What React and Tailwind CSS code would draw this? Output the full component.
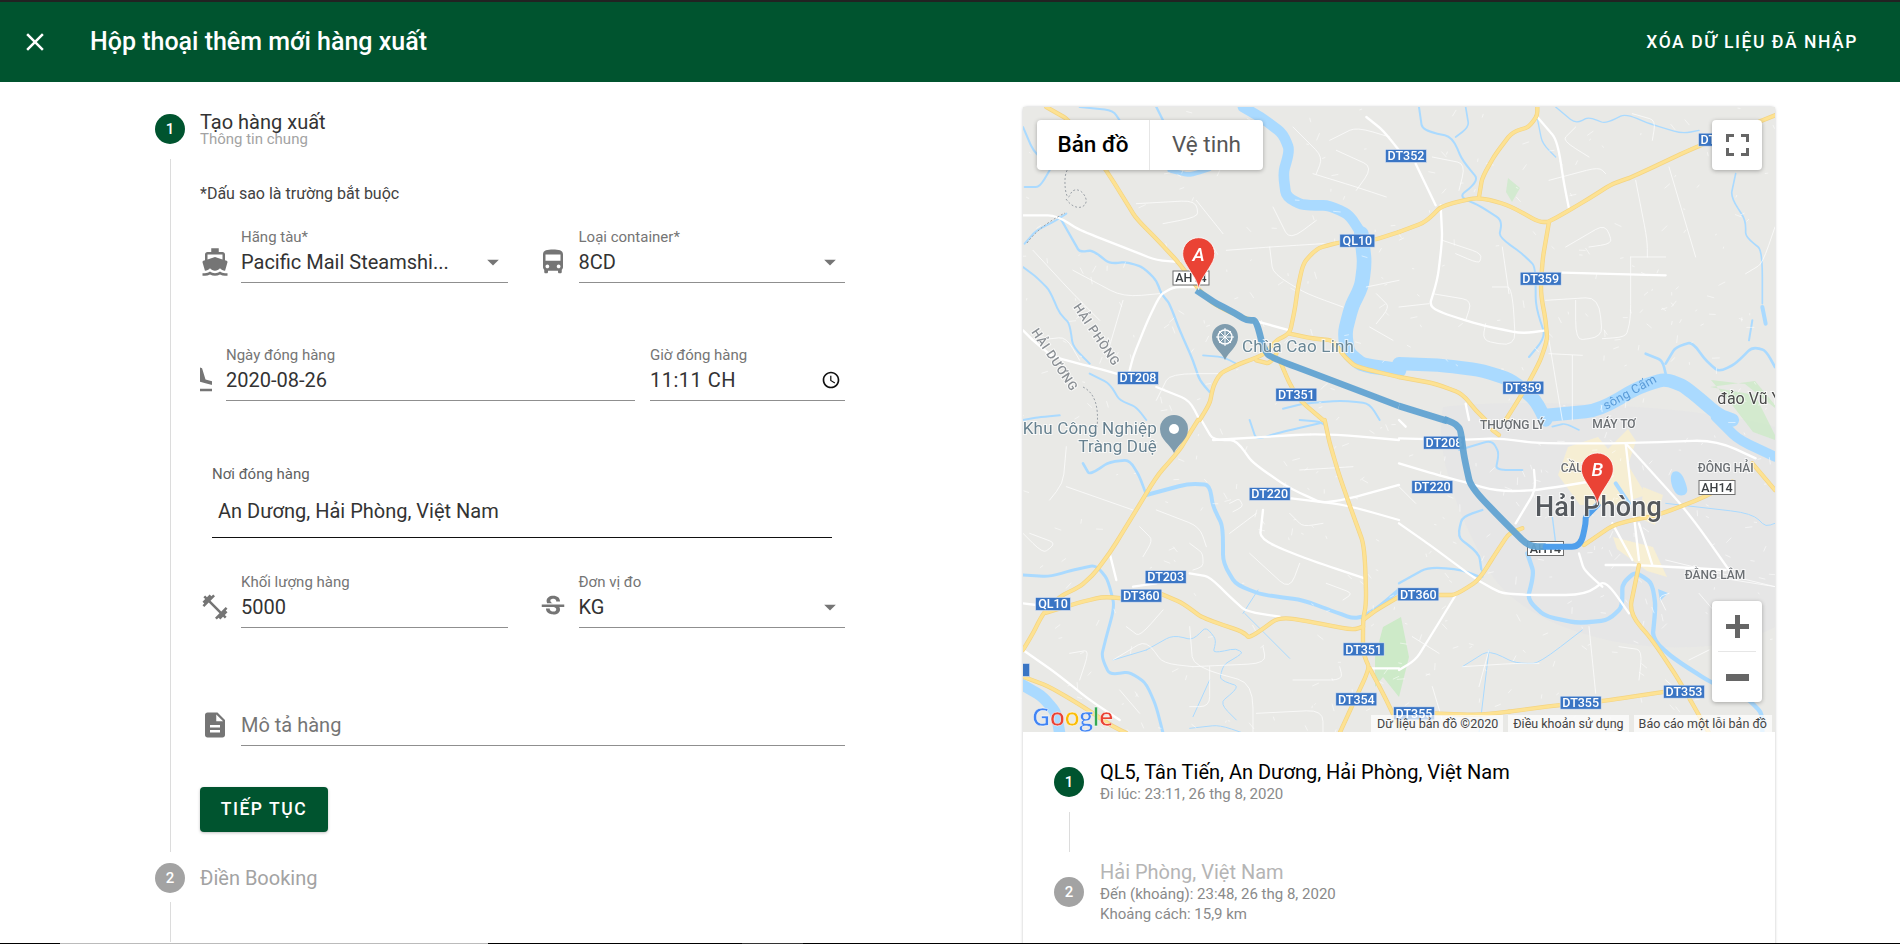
import React from 'react';

// material icon paths
const ICONS = {
  boat: 'M20 21c-1.39 0-2.78-.47-4-1.32-2.44 1.71-5.56 1.71-8 0C6.78 20.53 5.39 21 4 21H2v2h2c1.38 0 2.74-.35 4-.99 2.52 1.29 5.48 1.29 8 0 1.26.65 2.62.99 4 .99h2v-2h-2zM3.95 19H4c1.6 0 3.02-.88 4-2 .98 1.12 2.4 2 4 2s3.02-.88 4-2c.98 1.12 2.4 2 4 2h.05l1.89-6.68c.08-.26.06-.54-.06-.78s-.34-.42-.6-.5L20 10.62V6c0-1.1-.9-2-2-2h-3V1H9v3H6c-1.1 0-2 .9-2 2v4.62l-1.29.42c-.26.08-.48.26-.6.5s-.15.52-.06.78L3.95 19zM6 6h12v3.97L12 8 6 9.97V6z',
  bus: 'M4 16c0 .88.39 1.67 1 2.22V20c0 .55.45 1 1 1h1c.55 0 1-.45 1-1v-1h8v1c0 .55.45 1 1 1h1c.55 0 1-.45 1-1v-1.78c.61-.55 1-1.34 1-2.22V6c0-3.5-3.58-4-8-4s-8 .5-8 4v10zm3.5 1c-.83 0-1.5-.67-1.5-1.5S6.67 14 7.5 14s1.5.67 1.5 1.5S8.33 17 7.5 17zm9 0c-.83 0-1.5-.67-1.5-1.5s.67-1.5 1.5-1.5 1.5.67 1.5 1.5-.67 1.5-1.5 1.5zm1.5-6H6V6h12v5z',
  land: 'M2.5 19h19v2h-19zm7.18-5.73l4.35 1.16 5.31 1.42c.8.21 1.62-.26 1.84-1.06.21-.8-.26-1.62-1.06-1.84l-5.31-1.42-2.76-9.02L10.12 2v8.28L5.15 8.95l-.93-2.32-1.45-.39v5.17l1.6.43 5.31 1.43z',
  clock: 'M11.99 2C6.47 2 2 6.48 2 12s4.47 10 9.99 10C17.52 22 22 17.52 22 12S17.52 2 11.99 2zM12 20c-4.42 0-8-3.58-8-8s3.58-8 8-8 8 3.58 8 8-3.58 8-8 8zm.5-13H11v6l5.25 3.15.75-1.23-4.5-2.67z',
  weight: 'M20.57 14.86L22 13.43 20.57 12 17 15.57 8.43 7 12 3.43 10.57 2 9.14 3.43 7.71 2 5.57 4.14 4.14 2.71 2.71 4.14l1.43 1.43L2 7.71l1.43 1.43L2 10.57 3.43 12 7 8.43 15.57 17 12 20.57 13.43 22l1.43-1.43L16.29 22l2.14-2.14 1.43 1.43 1.43-1.43-1.43-1.43L22 16.29z',
  strike: 'M7.24 8.75c-.26-.48-.39-1.03-.39-1.67 0-.61.13-1.16.4-1.67.26-.5.63-.93 1.11-1.29.48-.35 1.05-.63 1.7-.83.66-.19 1.39-.29 2.18-.29.81 0 1.54.11 2.21.34.66.22 1.23.54 1.69.94.47.4.83.88 1.08 1.43.25.55.38 1.15.38 1.81h-3.01c0-.31-.05-.59-.15-.85-.09-.27-.24-.49-.44-.68-.2-.19-.45-.33-.75-.44-.3-.1-.66-.16-1.06-.16-.39 0-.74.04-1.03.13-.29.09-.53.21-.72.36-.19.16-.34.34-.44.55-.1.21-.15.43-.15.66 0 .48.25.88.74 1.21.38.25.77.48 1.41.7H7.39c-.05-.08-.11-.17-.15-.25zM21 12v-2H3v2h9.62c.18.07.4.14.55.2.37.17.66.34.87.51.21.17.35.36.43.57.07.2.11.43.11.69 0 .23-.05.45-.14.66-.09.2-.23.38-.42.53-.19.15-.42.26-.71.35-.29.08-.63.13-1.01.13-.43 0-.83-.04-1.18-.13s-.66-.23-.91-.42c-.25-.19-.45-.44-.59-.75-.14-.31-.25-.76-.25-1.21H6.4c0 .55.08 1.13.24 1.58.16.45.37.85.65 1.21.28.35.6.66.98.92.37.26.78.48 1.22.65.44.17.9.3 1.38.39.48.08.96.13 1.44.13.8 0 1.53-.09 2.18-.28s1.21-.45 1.67-.79c.46-.34.82-.77 1.07-1.27s.38-1.07.38-1.71c0-.6-.1-1.14-.31-1.61-.05-.11-.11-.23-.17-.33H21z',
  doc: 'M14 2H6c-1.1 0-1.99.9-1.99 2L4 20c0 1.1.89 2 1.99 2H18c1.1 0 2-.9 2-2V8l-6-6zm2 16H8v-2h8v2zm0-4H8v-2h8v2zm-3-5V3.5L18.5 9H13z',
  arrow: 'M7 10l5 5 5-5z',
};

function Icon({ name, className }) {
  return (
    <svg viewBox="0 0 24 24" className={className} fill="currentColor">
      <path d={ICONS[name]} />
    </svg>
  );
}

function Field({ label, value, select, placeholder, clock, className = '' }) {
  return (
    <div className={`flex flex-col min-w-0 ${className}`}>
      <div className="h-4 text-[15px] leading-4 text-[#757575] whitespace-nowrap">{label}</div>
      <div className="flex h-[38px] items-center justify-between border-b border-[#8f8f8f] pb-[3px]">
        <span className={`text-[20px] leading-6 whitespace-nowrap ${placeholder ? 'text-[#757575]' : 'text-[#333]'} ${clock ? 'tracking-[0.5px]' : ''}`}>{value}</span>
        {select && <Icon name="arrow" className="mr-[1px] h-7 w-7 text-[#757575]" />}
        {clock && <Icon name="clock" className="mr-[4px] h-[20px] w-[20px] text-[#111]" />}
      </div>
    </div>
  );
}

function IconField({ icon, ...props }) {
  return (
    <div className="flex flex-1 items-end">
      <div className="mb-[6px] w-[41px] shrink-0">
        <Icon name={icon} className="h-[30px] w-[30px] text-[#757575]" />
      </div>
      <Field {...props} className="flex-1" />
    </div>
  );
}

function StepDot({ n, active }) {
  return (
    <div className={`flex h-[30px] w-[30px] shrink-0 items-center justify-center rounded-full text-[15px] font-medium text-white ${active ? 'bg-[#00542f]' : 'bg-[#a3a3a3]'}`}>
      {n}
    </div>
  );
}

/* ---------- map drawing ---------- */
// every feature is written in px of a 3x crop of one quarter of the map
const OFFSET = { a: [0, 0], b: [376, 0], c: [0, 313], d: [376, 313] };

const WATER = {
  a: [
    [32, '660,0 720,35 780,80 800,130 780,200 790,270 840,295 920,295 980,325 1015,380'],
    [44, '1015,380 1025,470 1015,540 985,600 965,680 975,740 1020,775 1128,790'],
    [7, '110,330 150,400 170,435 210,430 260,470 310,465 360,480 400,520 415,560 440,590 470,670 510,760 530,820 560,855'],
    [6, '5,410 40,370 100,340 130,320'],
    [6, '0,480 40,510 80,550 110,620 140,650 150,720 200,770'],
    [6, '5,240 50,240 80,190'],
    [6, '0,60 30,130 60,160'],
    [6, '170,0 270,10 290,40'],
    [7, '400,0 430,60 470,80'],
    [6, '200,800 260,830 290,880 340,900 370,939'],
    [6, '780,905 840,890 960,880 1040,890 1070,939'],
    [6, '0,939 50,930 110,925'],
    [14, '440,190 500,205 560,185'],
    [5, '540,745 600,750 640,770'],
  ],
  b: [
    [40, '0,770 130,775 250,790 340,820 410,880 440,939'],
    [40, '440,925 600,910 720,840 800,815 860,840 960,925 1000,939'],
    [6, '60,0 70,70 160,90 190,160 240,220 180,270 240,295 310,340 300,390 370,440 410,480 410,600 440,690 390,750'],
    [8, '800,770 830,720 880,705 920,760 960,795 1010,770 1060,720 1100,730 1128,780'],
    [8, '740,740 790,760 800,800'],
    [5, '1010,200 995,270 1040,340 1040,390 1090,430 1090,590'],
    [12, '1090,600 1100,650'],
    [4, '470,0 530,50 570,30 620,50 680,20 750,50 850,80 900,70'],
    [4, '415,35 430,110 470,150'],
    [6, '1060,640 1050,700'],
    [5, '200,0 210,60 170,90'],
  ],
  c: [
    [9, '0,465 80,470 150,450 220,435 255,480 275,560 250,650 235,710 260,765 320,755 370,790 400,860 420,939'],
    [8, '180,130 200,165 260,125 320,120 350,170 370,225'],
    [12, '370,225 500,190 560,195 570,260 600,320 600,430 640,495 720,525 840,540 920,570 990,595 1020,590 1070,560 1128,510'],
    [3, '370,690 450,645 510,660 550,620 580,660 570,700 640,685 660,700 600,735 590,780 650,800 590,850 640,900'],
    [3, '665,580 800,715'],
    [3, '705,510 660,580'],
    [3, '510,890 560,780'],
    [3, '270,720 370,690'],
    [34, '-10,790 60,830 100,880 110,939'],
    [6, '680,0 700,60 760,40 890,10'],
    [6, '830,0 890,5 905,15'],
    [3, '500,925 590,915 660,939'],
  ],
  d: [
    [13, '385,400 405,460 385,540 440,590 540,610 630,600 670,560 670,490 710,455 760,490 770,560 760,660 830,720 940,790 1040,830 1090,880 1090,939'],
    [7, '0,490 90,440 190,450 240,470'],
    [7, '250,470 240,400 175,350 190,290 250,270'],
    [6, '180,90 280,60 300,100 290,150 370,150'],
    [30, '950,-10 1020,60 1128,110'],
    [12, '650,190 690,250'],
    [3, '190,740 270,690 350,730 420,730 550,630'],
    [3, '240,939 270,690'],
    [3, '800,250 1060,280 1100,320 1128,310'],
    [5, '460,20 500,10 540,30'],
    [4, '460,290 470,370'],
  ],
};

const MINOR = {
  a: ['340,290 520,280 525,330 420,350', '610,430 740,420 900,410', '740,420 750,500 850,560 960,600', '750,300 800,400 880,340', '920,100 1000,60 1100,90', '870,200 1000,240 1090,270', '1030,540 1128,520', '1040,660 1110,700', '300,580 250,750', '150,490 300,570 410,560', '30,430 150,560 230,640', '520,280 600,380', '400,880 440,800 600,800', '810,60 900,150 880,200', '940,130 1050,180 1000,250', '1060,560 1100,600 1060,650', '40,700 130,690 170,760'],
  b: ['100,150 200,170 180,250', '130,400 250,440 240,470 170,440', '280,540 340,540 350,720 250,700 260,650', '440,580 600,570 610,690 530,700 530,580', '500,420 620,350 640,410 570,420', '710,220 745,400 745,450', '810,180 890,450', '450,740 550,745', '520,745 520,939', '450,700 490,939', '450,220 600,180 620,200', '310,420 330,560', '0,600 90,590', '1040,500 1090,470 1128,360', '100,560 220,580 200,640', '530,60 490,100 570,150', '700,20 770,40 760,100', '695,450 800,450', '695,450 695,640 680,690 610,695'],
  c: ['130,80 120,190 80,240', '130,200 330,270', '20,340 100,370 60,400 0,340', '350,320 390,360 360,410', '500,370 540,400 540,440 510,450', '400,270 530,320 550,380', '310,620 350,650 420,570', '500,620 510,740 690,790 690,939', '510,740 730,730 720,680', '560,740 560,860 500,860', '270,720 370,660 420,730 510,740', '810,780 960,780 950,740', '700,880 900,870 900,939', '620,250 650,235 660,260 630,275', '620,340 700,280', '680,400 800,510 830,430', '910,490 990,520 960,540', '830,150 990,140', '800,280 840,320 900,310', '290,810 350,880', '140,700 200,690 170,780'],
  d: ['0,200 50,250', '190,740 350,730 420,730', '270,690 240,800', '100,800 130,900', '660,680 730,690 720,780', '800,570 780,530 810,520', '900,520 960,590', '870,720 930,690', '800,780 880,850', '570,620 590,820', '40,650 120,700', '880,460 1128,500', '800,420 1128,500'],
};

const WHITE = {
  a: ['0,325 100,325 170,370 300,420 400,460 470,465', '525,540 450,540 410,565 370,650 330,750 320,790', '0,670 30,700 90,750 190,775 280,800', '400,840 500,880 530,939', '690,640 800,670', '1030,30 1080,70 1128,130'],
  b: ['415,30 475,100 495,230 510,305', '50,170 110,295', '125,295 130,400 115,520 90,600 150,625 250,655 370,680 440,670', '490,497 800,505', '200,890 210,939'],
  c: ['535,0 570,60 640,60 690,130 800,205 910,255 1128,195', '805,235 970,255 1128,300', '570,60 900,40 1128,60', '500,460 560,470 620,530 670,575 770,590', '260,400 280,480', '0,550 40,555', '0,690 100,760 200,840 290,900', '720,270 710,360 860,420 1025,475', '1040,745 1128,745', '330,500 400,490'],
  d: ['0,55 180,60 300,55 420,70 680,70 950,60 1070,115', '0,130 100,160 300,215 420,210 600,180', '0,310 100,380 240,485 320,525 560,525 620,480 690,580', '540,400 555,450 610,500', '680,70 720,420', '640,310 700,420', '720,310 760,435', '620,435 720,435 980,450', '350,310 410,210 405,150', '170,525 100,640 50,720 0,750', '680,70 870,280 990,450', '0,0 20,20'],
};

const YELLOW = {
  a: ['70,0 140,40 250,190 300,270 340,335 400,395 470,470 525,545 570,590 640,625 690,640', '1128,375 1050,400 950,405 880,425 840,470 825,540 815,610 800,680 760,700 720,745 650,770 590,800 570,840 560,890 530,939', '800,680 870,695 930,700 965,750 1000,780 1128,810', '770,760 800,830 830,880 900,939', '700,760 740,770 760,740'],
  b: ['0,375 80,345 130,295 240,270 330,295 420,345 450,345 570,275 640,230 700,210 890,120 1128,25', '240,270 250,210 290,140 340,75 390,60 415,25 415,0', '450,345 430,460 425,560 440,640 445,700 420,770 370,860 320,939', '0,810 110,830 190,860 230,910 260,939'],
  c: ['525,0 500,40 470,90 400,170 340,270 260,400 210,465 170,500 110,530 60,580 30,640 0,690', '70,578 160,550 240,530 300,535', '410,520 480,550 540,595 660,635 680,655 770,590 860,605 990,630 1020,620', '905,0 920,70 950,170 985,270 1025,380 1030,550 1020,600 1020,700 1040,745 1000,830 950,939', '1040,745 1085,830 1128,920', '1020,600 1060,570 1128,530', '0,770 80,800 180,860 270,920 310,939'],
  d: ['120,525 170,525 240,480 290,400 330,340 370,325', '555,375 650,310 780,285 920,230 1000,185', '1060,130 1128,210', '720,435 690,580 760,660 840,780 930,939', '330,875 480,855 600,845 800,815', '100,880 240,885 330,875', '280,30 300,45'],
};

const ROUTE_DARK = {
  a: '520,550 580,590 630,615 670,640 700,640 720,720 740,750 900,810 1128,897',
  b: '0,897 145,942',
  d: '135,-3 170,12 185,30 195,110 215,200 300,290 390,380 440,380',
};
const ROUTE_LIGHT = { d: '440,380 545,380 560,310 560,290 595,255' };

const SHIELDS = [
  ['a', 345, 813, 'DT208'], ['a', 1003, 401, 'QL10', 35], ['a', 820, 863, 'DT351'],
  ['a', 1149, 147, 'DT352'], ['b', 960, 98, 'DT359'], ['b', 425, 515, 'DT359'], ['b', 373, 842, 'DT359'],
  ['c', 740, 222, 'DT220'], ['c', 428, 471, 'DT203'], ['c', 355, 527, 'DT360'], ['c', 90, 552, 'QL10', 35],
  ['c', 1022, 688, 'DT351'], ['c', 1000, 838, 'DT354'], ['c', -25, 750, '', 30],
  ['d', 135, 68, 'DT208'], ['d', 100, 201, 'DT220'], ['d', 58, 523, 'DT360'], ['d', 855, 815, 'DT353'],
  ['d', 545, 848, 'DT355'], ['d', 45, 880, 'DT355'],
];

const PLACES = [
  ['b', 955, 892, 'đảo Vũ Yên', 16, '#4a4a4a', 400, 'start'],
  ['d', 340, 26, 'THƯỢNG LÝ', 12, '#6b6f73', 500, 'middle'],
  ['d', 645, 24, 'MÁY TƠ', 12, '#6b6f73', 500, 'middle'],
  ['d', 485, 157, 'CẦU', 12, '#6b6f73', 500, 'start'],
  ['d', 980, 155, 'ĐÔNG HẢI', 12, '#6b6f73', 500, 'middle'],
  ['d', 948, 477, 'ĐẰNG LÂM', 12, '#6b6f73', 500, 'middle'],
];

// deterministic speckle for the small village lanes
const SPECKLE = (() => {
  const out = [];
  let s = 17;
  const rnd = () => {
    s = (s * 16807) % 2147483647;
    return s / 2147483647;
  };
  for (let i = 0; i < 520; i++) {
    const x = rnd() * 752;
    const y = rnd() * 625;
    const a = rnd() * 3.14;
    const l = 2 + rnd() * 6;
    out.push(`M${x.toFixed(1)} ${y.toFixed(1)}l${(Math.cos(a) * l).toFixed(1)} ${(Math.sin(a) * l).toFixed(1)}`);
  }
  return out.join('');
})();

function smooth(str) {
  const p = str.split(' ').map((s) => s.split(',').map(Number));
  if (p.length < 3) return `M${p.map((q) => q.join(' ')).join('L')}`;
  let d = `M${p[0][0]} ${p[0][1]}`;
  for (let i = 1; i < p.length - 1; i++) {
    const mx = (p[i][0] + p[i + 1][0]) / 2;
    const my = (p[i][1] + p[i + 1][1]) / 2;
    d += `L${(p[i - 1][0] * 0.25 + p[i][0] * 0.75).toFixed(1)} ${(p[i - 1][1] * 0.25 + p[i][1] * 0.75).toFixed(1)}Q${p[i][0]} ${p[i][1]} ${mx} ${my}`;
  }
  const e = p[p.length - 1];
  return `${d}L${e[0]} ${e[1]}`;
}

function Quarter({ q, children }) {
  const [x, y] = OFFSET[q];
  return <g transform={`translate(${x} ${y}) scale(0.33333)`}>{children}</g>;
}

function Layer({ data, color, width, opacity }) {
  return Object.keys(data).map((q) => (
    <Quarter key={q} q={q}>
      {data[q].map((d, i) => (
        <path key={i} d={smooth(d)} fill="none" stroke={color} strokeWidth={width} opacity={opacity} strokeLinecap="round" strokeLinejoin="round" />
      ))}
    </Quarter>
  ));
}

function Shield({ q, x, y, text, w = 41 }) {
  const cx = x / 3 + OFFSET[q][0];
  const cy = y / 3 + OFFSET[q][1];
  return (
    <g>
      <rect x={cx - w / 2} y={cy - 6.5} width={w} height={13} fill="#3a75c4" stroke="#dfe7f3" strokeWidth="0.6" />
      <text x={cx} y={cy + 4.4} textAnchor="middle" fontSize="12.5" fontWeight="500" fill="#fff">{text}</text>
    </g>
  );
}

function Pin({ x, y, letter }) {
  return (
    <g transform={`translate(${x} ${y})`}>
      <path d="M0 0C-1-8-5-13-10-21c-3-5-6-9-6-15 0-9 7-16 16-16s16 7 16 16c0 6-3 10-6 15C5-13 1-8 0 0z" fill="#ea4335" stroke="#fff" strokeWidth="0.8" />
      <text x="0" y="-29" textAnchor="middle" fontSize="19" fontStyle="italic" fontWeight="500" fill="#fff">{letter}</text>
    </g>
  );
}

function MapSvg() {
  const halo = { stroke: '#fff', strokeWidth: 2, strokeOpacity: 0.7, paintOrder: 'stroke' };
  return (
    <svg viewBox="0 0 752 625" className="block h-[625px] w-[752px] blur-[0.35px]">
      <rect width="752" height="625" fill="#e9e9e6" />
      {/* urban tint around the city */}
      <path d="M420 300C500 290 690 300 752 320V520C680 560 520 540 470 470 440 420 410 350 420 300z" fill="#e6e6e6" />
      <g opacity="0.7">
        <path d="M545 340l30-10 10 12 20-20 8 12-8 24 18 30-30 10-36 0-22-30z" fill="#fdf2cc" />
        <path d="M620 380l20 8-8 30-14-6zM590 430l40 10 14 30-20-6-30-22z" fill="#fdf2cc" />
      </g>
      <path d="M687 280l45 8 20 40v-30l-20-24zM688 273l34 4 30 24v32l-22-8-20-26z" fill="#cdeac8" opacity="0.8" />
      <path d="M360 520l18-10 8 40-10 40-16-20-8 10v-30z" fill="#cdeac8" />
      <path d="M485 71l12 10-8 14-6-10z" fill="#d3ead0" />

      {Object.keys(WATER).map((q) => (
        <Quarter key={q} q={q}>
          {WATER[q].map(([w, d], i) => (
            <path key={i} d={smooth(d)} fill="none" stroke="#aadaff" strokeWidth={w} strokeLinecap="round" strokeLinejoin="round" />
          ))}
        </Quarter>
      ))}
      <path d="M650 365c8-4 12 8 14 16 2 8-8 10-12 4s-6-16-2-20z" fill="#aadaff" />
      <path d="M635 482l10 4-8 8z" fill="#aadaff" />

      <path d={SPECKLE} fill="none" stroke="#fff" strokeWidth="0.8" opacity="0.65" />
      <Layer data={MINOR} color="#fff" width={3} opacity={0.7} />
      <Layer data={WHITE} color="#fff" width={7} />
      <Layer data={YELLOW} color="#f4d482" width={13} />
      <Layer data={YELLOW} color="#fde293" width={9} />

      {/* province border */}
      <path d="M43 92c10 14 22 8 20 0s-12-14-16-4-8-20-2-26 0-12-4-20" fill="none" stroke="#9aa0a6" strokeWidth="1" strokeDasharray="2 2" />
      <path d="M4 136c10-14 26-24 38-30M60 280c12 6 16 20 14 40" fill="none" stroke="#9aa0a6" strokeWidth="1" strokeDasharray="2 2" />

      {SHIELDS.map(([q, x, y, text, w]) => (
        <Shield key={q + x} q={q} x={x} y={y} text={text} w={w} />
      ))}

      {/* AH14 plates */}
      {[[168, 171], [522.5, 441.5], [694, 380.5]].map(([x, y]) => (
        <g key={x}>
          <rect x={x - 18} y={y - 7} width="36" height="14" fill="#fff" stroke="#6f6f6f" strokeWidth="1" />
          <text x={x} y={y + 4.4} textAnchor="middle" fontSize="12.5" fontWeight="500" fill="#3c4043">AH14</text>
        </g>
      ))}

      <Quarter q="a">
        <path d={smooth(ROUTE_DARK.a)} fill="none" stroke="#62a3d2" strokeWidth="20" strokeLinejoin="round" opacity="0.95" />
      </Quarter>
      <Quarter q="b">
        <path d={smooth(ROUTE_DARK.b)} fill="none" stroke="#62a3d2" strokeWidth="20" opacity="0.95" />
      </Quarter>
      <Quarter q="d">
        <path d={smooth(ROUTE_DARK.d)} fill="none" stroke="#62a3d2" strokeWidth="20" strokeLinejoin="round" opacity="0.95" />
        <path d={smooth(ROUTE_LIGHT.d)} fill="none" stroke="#4f9fec" strokeWidth="18" strokeLinejoin="round" strokeLinecap="round" />
      </Quarter>

      {/* pois */}
      <g>
        <path d="M202 253c-4-9-13-13-13-23a13 13 0 0 1 26 0c0 10-9 14-13 23z" fill="#7f9cae" />
        <circle cx="202" cy="230" r="7" fill="none" stroke="#fff" strokeWidth="1.5" />
        <path d="M202 221v18M193 230h18M196 224l12 12M208 224l-12 12" stroke="#fff" strokeWidth="1" />
        <text x="219" y="245" fontSize="17" fill="#6a8796" letterSpacing="0.2" {...halo}>Chùa Cao Linh</text>

        <path d="M151 346c-4-9-14-13-14-24a14 14 0 0 1 28 0c0 11-10 15-14 24z" fill="#7f9cae" />
        <circle cx="151" cy="322" r="5" fill="#fff" />
        <text x="134" y="327" textAnchor="end" fontSize="17" fill="#66808f" letterSpacing="0.2" {...halo}>Khu Công Nghiệp</text>
        <text x="134" y="345" textAnchor="end" fontSize="17" fill="#66808f" letterSpacing="0.2" {...halo}>Tràng Duệ</text>
      </g>

      <text transform="translate(50 200) rotate(56)" fontSize="12.5" fontWeight="500" fill="#8a8f94" letterSpacing="0.6" {...halo}>HẢI PHÒNG</text>
      <text transform="translate(8 225) rotate(56)" fontSize="12.5" fontWeight="500" fill="#8a8f94" letterSpacing="0.6" {...halo}>HẢI DƯƠNG</text>
      <text transform="translate(583 303) rotate(-29)" fontSize="12.5" fill="#5a9bd8" letterSpacing="0.3">sông Cấm</text>

      {PLACES.map(([q, x, y, text, size, fill, weight, anchor]) => (
        <text key={text} x={x / 3 + OFFSET[q][0]} y={y / 3 + OFFSET[q][1]} fontSize={size} fill={fill} fontWeight={weight} textAnchor={anchor} {...halo}>{text}</text>
      ))}
      <text x="512" y="409" fontSize="27" fontWeight="500" fill="#55595e" letterSpacing="0.2" {...halo}>Hải Phòng</text>

      <Pin x={175.7} y={182.7} letter="A" />
      <Pin x={574.3} y={398} letter="B" />

      {/* google wordmark */}
      <text x="9" y="619" fontFamily="'Open Sans',sans-serif" fontSize="25" fontWeight="600" stroke="#fff" strokeWidth="0.4" letterSpacing="-0.5">
        <tspan fill="#4285f4">G</tspan><tspan fill="#ea4335">o</tspan><tspan fill="#fbbc05">o</tspan><tspan fill="#4285f4">g</tspan><tspan fill="#34a853">l</tspan><tspan fill="#ea4335">e</tspan>
      </text>
    </svg>
  );
}

function MapPanel() {
  return (
    <div className="relative h-[625px] w-[752px] overflow-hidden">
      <MapSvg />
      <div className="absolute left-[14px] top-[13px] flex h-[50px] w-[226px] rounded-sm bg-white text-[22.5px] shadow-[0_1px_4px_rgba(0,0,0,0.3)]">
        <div className="flex w-[113px] items-center justify-center border-r border-[#e6e6e6] font-medium text-black">Bản đồ</div>
        <div className="flex flex-1 items-center justify-center text-[#565656]">Vệ tinh</div>
      </div>
      <div className="absolute left-[689px] top-[13px] flex h-[50px] w-[50px] items-center justify-center rounded-sm bg-white shadow-[0_1px_4px_rgba(0,0,0,0.3)]">
        <svg viewBox="0 0 23 22" className="h-[22px] w-[23px]" fill="none" stroke="#666" strokeWidth="3">
          <path d="M1.5 8V1.5H8M15 1.5h6.500V8M21.500 14v6.500H15M8 20.500H1.500V14" />
        </svg>
      </div>
      <div className="absolute left-[689px] top-[494px] flex h-[101px] w-[50px] flex-col items-center rounded-sm bg-white shadow-[0_1px_4px_rgba(0,0,0,0.3)]">
        <div className="flex h-[50px] items-center justify-center">
          <svg viewBox="0 0 23 23" className="h-[23px] w-[23px]" fill="#666"><path d="M9 0h5v9h9v5h-9v9H9v-9H0V9h9z" /></svg>
        </div>
        <div className="h-px w-[38px] bg-[#e6e6e6]" />
        <div className="flex h-[50px] items-center justify-center">
          <svg viewBox="0 0 23 7" className="h-[7px] w-[23px]" fill="#666"><path d="M0 0h23v7H0z" /></svg>
        </div>
      </div>
      <div className="absolute bottom-0 right-0 flex h-[17px] items-center gap-[5px] pr-[3px] text-[12.5px] leading-[17px] text-[#444]">
        <span className="bg-white/70 pl-[6px] pr-[5px]">Dữ liệu bản đồ ©2020</span>
        <span className="bg-white/70 px-[5px]">Điều khoản sử dụng</span>
        <span className="bg-white/70 px-[5px]">Báo cáo một lỗi bản đồ</span>
      </div>
    </div>
  );
}

export default function App() {
  return (
    <div className="flex h-screen w-full flex-col overflow-hidden bg-white font-['Roboto',sans-serif]">
      {/* Toolbar */}
      <header className="flex h-[82px] shrink-0 items-center justify-between border-t-2 border-[#222] bg-[#00542f] pl-[20px] pr-[42px] text-white">
        <div className="flex items-center">
          <svg viewBox="0 0 24 24" className="h-[30px] w-[30px]" fill="currentColor">
            <path d="M19 6.410L17.590 5 12 10.590 6.410 5 5 6.410 10.590 12 5 17.590 6.410 19 12 13.410 17.590 19 19 17.590 13.410 12z" />
          </svg>
          <h1 className="ml-[40px] text-[25px] font-medium">Hộp thoại thêm mới hàng xuất</h1>
        </div>
        <button className="text-[17.5px] font-medium tracking-[1.56px]">XÓA DỮ LIỆU ĐÃ NHẬP</button>
      </header>

      <main className="flex min-h-0 flex-1 overflow-hidden">
        {/* Stepper */}
        <section className="w-[1023px] shrink-0 pl-[155px] pt-[32px]">
          <div className="flex">
            <StepDot n="1" active />
            <div className="-mt-[2px] ml-[15px]">
              <div className="text-[20px] leading-5 text-[#333]">Tạo hàng xuất</div>
              <div className="text-[15px] leading-[14px] text-[#a3a3a3]">Thông tin chung</div>
            </div>
          </div>
          <div className="ml-[15px] mt-[13px] h-[693px] border-l border-[#dcdcdc] pl-[29px] pt-[25px]">
            <p className="text-base leading-5 text-[#424242]">*Dấu sao là trường bắt buộc</p>

            <div className="mt-[25px] flex w-[645px] gap-[30px]">
              <IconField icon="boat" label="Hãng tàu*" value="Pacific Mail Steamshi..." select />
              <IconField icon="bus" label="Loại container*" value="8CD" select />
            </div>

            <div className="mt-[64px] flex w-[645px] items-end">
              <div className="mb-[6px] mr-[14px] w-[12px] overflow-hidden">
                <Icon name="land" className="-ml-[13px] h-[30px] w-[30px] max-w-none text-[#757575]" />
              </div>
              <Field label="Ngày đóng hàng" value="2020-08-26" className="flex-1" />
              <Field label="Giờ đóng hàng" value="11:11 CH" clock className="ml-[15px] w-[195px]" />
            </div>

            <div className="ml-[12px] mt-[65px] w-[620px]">
              <div className="h-4 text-[15px] leading-4 text-[#616161]">Nơi đóng hàng</div>
              <div className="flex h-[56px] items-center border-b border-[#111] pl-[6px] pt-[2px] text-[20px] text-[#333]">An Dương, Hải Phòng, Việt Nam</div>
            </div>

            <div className="mt-[36px] flex w-[645px] gap-[30px]">
              <IconField icon="weight" label="Khối lượng hàng" value="5000" />
              <IconField icon="strike" label="Đơn vị đo" value="KG" select />
            </div>

            <div className="mt-[64px] flex w-[645px]">
              <IconField icon="doc" label="" value="Mô tả hàng" placeholder />
            </div>

            <button className="mt-[41px] flex h-[45px] w-[128px] items-center justify-center rounded bg-[#00542f] text-[17.5px] font-medium tracking-[1.56px] text-white shadow-[0_1px_3px_rgba(0,0,0,0.25)]">TIẾP TỤC</button>
          </div>
          <div className="flex items-center pt-[11px]">
            <StepDot n="2" />
            <div className="ml-[15px] text-[20px] text-[#a3a3a3]">Điền Booking</div>
          </div>
          <div className="ml-[15px] mt-[9px] h-[40px] border-l border-[#dcdcdc]" />
        </section>

        {/* Route summary */}
        <section className="pt-[25px]">
          <div className="w-[752px] rounded-sm shadow-[0_0_3px_rgba(0,0,0,0.25)] pb-[40px]">
            <MapPanel />
            <div className="pl-[31px] pt-[28px]">
              <div className="flex items-center gap-4">
                <StepDot n="1" active />
                <div>
                  <div className="text-[20px] leading-6 text-black">QL5, Tân Tiến, An Dương, Hải Phòng, Việt Nam</div>
                  <div className="text-[15px] leading-5 text-[#8a8a8a]">Đi lúc: 23:11, 26 thg 8, 2020</div>
                </div>
              </div>
              <div className="ml-[15px] mt-2 h-10 border-l border-[#dcdcdc]" />
              <div className="mt-2 flex items-center gap-4">
                <StepDot n="2" />
                <div>
                  <div className="text-[20px] leading-6 text-[#b5b5b5]">Hải Phòng, Việt Nam</div>
                  <div className="text-[15px] leading-5 text-[#8a8a8a]">Đến (khoảng): 23:48, 26 thg 8, 2020</div>
                  <div className="text-[15px] leading-5 text-[#8a8a8a]">Khoảng cách: 15,9 km</div>
                </div>
              </div>
            </div>
          </div>
        </section>
      </main>

      {/* screen edge */}
      <div className="flex h-px shrink-0 bg-black">
        <div className="ml-[60px] w-[428px] bg-[#bbb]" />
        <div className="ml-[254px] w-[61px] bg-[#333]" />
      </div>
    </div>
  );
}
